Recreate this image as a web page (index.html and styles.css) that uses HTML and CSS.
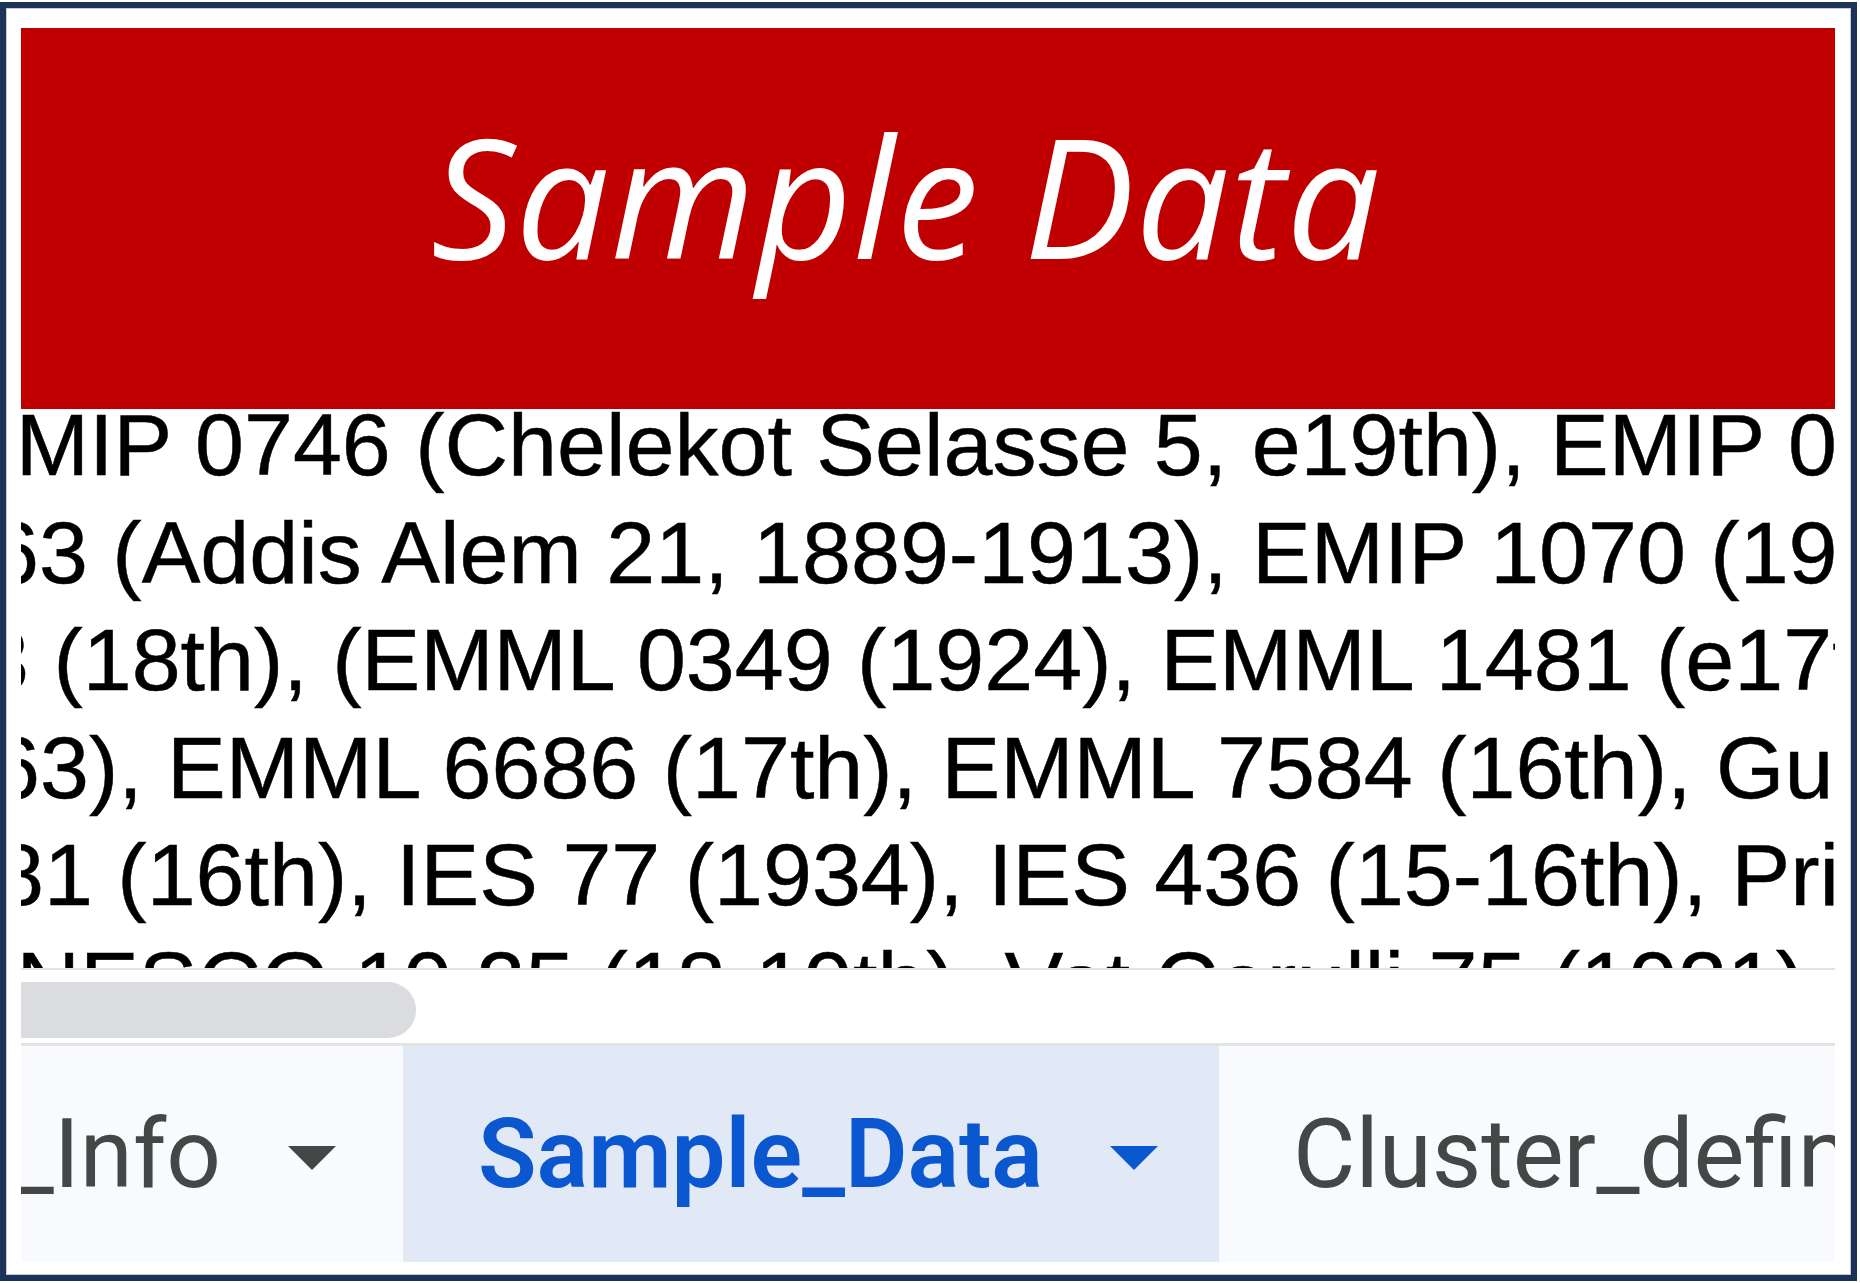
FILE: index.html
```html
<!DOCTYPE html>
<html lang="en">
<head>
<meta charset="utf-8">
<title>Sample Data</title>
<link rel="stylesheet" href="styles.css">
</head>
<body>
<div class="frame">
  <div class="banner"><h1 class="banner-title">Sample Data</h1></div>
  <div class="sheet">
    <div class="cell">
      <div class="ln l1">EMIP 0746 (Chelekot Selasse 5, e19th), EMIP 0812 (Debre Maryam 3)</div>
      <div class="ln l2">63 (Addis Alem 21, 1889-1913), EMIP 1070 (1900s), EMIP 1120</div>
      <div class="ln l3">3 (18th), (EMML 0349 (1924), EMML 1481 (e17th), EMML 2012</div>
      <div class="ln l4">63), EMML 6686 (17th), EMML 7584 (16th), Gunda Gunde 141</div>
      <div class="ln l5">81 (16th), IES 77 (1934), IES 436 (15-16th), Princeton 12</div>
      <div class="ln l6">UNESCO 10.25 (18-19th), Vat.Cerulli 75 (1921), Vat.Et 44</div>
    </div>
  </div>
  <div class="scroll"><div class="thumb"></div></div>
  <div class="tabs">
    <div class="tab tab-first">
      <span class="tab-label">_Info</span>
      <svg class="caret" viewBox="0 0 48 24" width="48" height="24"><polygon points="0,0 48,0 24,24" fill="#444746"/></svg>
    </div>
    <div class="tab tab-active">
      <span class="tab-label">Sample_Data</span>
      <svg class="caret" viewBox="0 0 48 24" width="48" height="24"><polygon points="0,0 48,0 24,24" fill="#0b57d0"/></svg>
    </div>
    <div class="tab tab-last">
      <span class="tab-label">Cluster_definitions</span>
    </div>
  </div>
</div>
</body>
</html>
```

FILE: styles.css
```css
html, body {
  margin: 0;
  padding: 0;
  background: #ffffff;
}

.frame {
  margin-top: 2px;
  width: 1857px;
  height: 1279px;
  box-sizing: border-box;
  border: 6px solid #1c3358;
  box-shadow: inset 0 0 0 1px #c3cbd8;
  padding: 20px 16px 13px 15px;
  display: flex;
  flex-direction: column;
  overflow: hidden;
}

.banner {
  flex: 0 0 381px;
  background: #c00000;
  display: flex;
  align-items: center;
  justify-content: center;
  padding: 0 44px 46px 0;
  box-sizing: border-box;
}

.banner-title {
  margin: 0;
  font-family: "Open Sans", "Noto Sans", sans-serif;
  font-style: italic;
  font-weight: 400;
  font-size: 166px;
  letter-spacing: 1px;
  line-height: 1.2;
  color: #ffffff;
}

.sheet {
  flex: 0 0 559px;
  overflow: hidden;
  background: #ffffff;
}

.cell {
  margin-top: -18px;
  font-family: "Liberation Sans", Arial, sans-serif;
  font-size: 88px;
  line-height: 107.5px;
  color: #000000;
  -webkit-text-stroke: 0.5px #000000;
}

.ln {
  white-space: nowrap;
}

.l1 { margin-left: -64px; }
.l2 { margin-left: -31px; }
.l3 { margin-left: -41px; }
.l4 { margin-left: -30px; }
.l5 { margin-left: -26px; }
.l6 { margin-left: -68px; }

.scroll {
  flex: 0 0 73px;
  border-top: 2px solid #e1e3e1;
  border-bottom: 3px solid #e3e3e3;
  background: #ffffff;
  display: flex;
  align-items: center;
}

.thumb {
  width: 395px;
  height: 56px;
  margin-top: 6px;
  background: #dadce0;
  border-radius: 0 28px 28px 0;
}

.tabs {
  flex: 0 0 216px;
  display: flex;
  background: #f8fafd;
  overflow: hidden;
}

.tab {
  display: flex;
  align-items: center;
  gap: 67px;
  box-sizing: border-box;
  font-family: Roboto, "Noto Sans", sans-serif;
  font-weight: 400;
  font-size: 96px;
  color: #444746;
  white-space: nowrap;
  overflow: hidden;
}

.tab-first {
  flex: 0 0 382px;
  justify-content: flex-end;
  padding-right: 67px;
}

.tab-active {
  flex: 0 0 816px;
  padding-left: 75px;
  background: #e1e9f7;
  color: #0b57d0;
  font-weight: 600;
}

.tab-last {
  flex: 1 1 auto;
  padding-left: 74px;
}

.tab-label {
  display: block;
  line-height: 1;
}

.caret {
  flex: 0 0 48px;
  display: block;
  margin-top: 8px;
}
```
